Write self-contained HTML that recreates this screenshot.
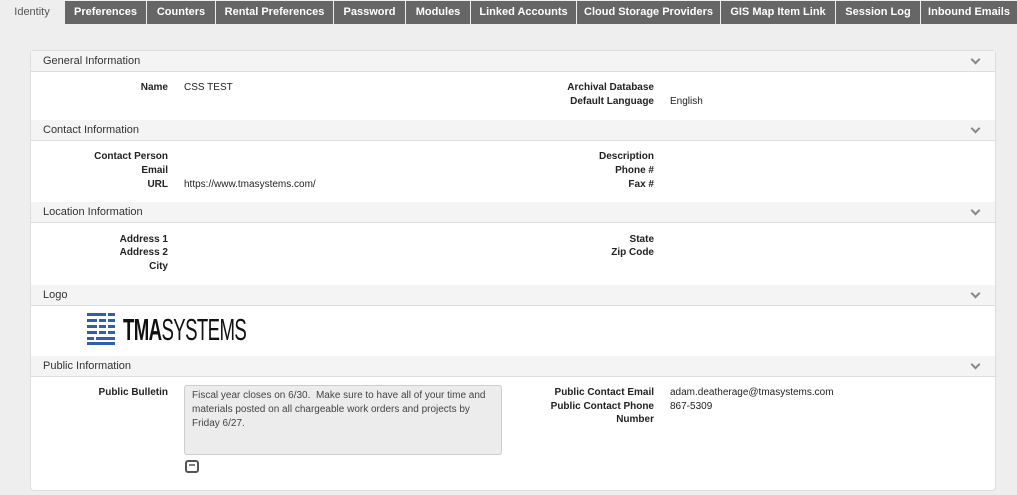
<!DOCTYPE html>
<html><head><style>
*{margin:0;padding:0;box-sizing:border-box}
body{width:1017px;height:495px;background:#eee;font-family:"Liberation Sans",Arial,sans-serif;font-size:10px;color:#222;position:relative;overflow:hidden}
.tabs{position:absolute;top:1px;left:0;height:23px;width:1017px}
.tab{position:absolute;top:0;height:23px;background:#666;color:#fff;font-weight:bold;font-size:11px;line-height:23px;text-align:center;white-space:nowrap}
.tab.act{background:#eee;color:#555;font-weight:normal}
.panel{position:absolute;left:30px;top:50px;width:966px;height:441px;background:#fff;border:1px solid #ddd;border-radius:4px}
.hdr{position:absolute;left:0;width:964px;height:21px;background:#f4f4f4;border-bottom:1px solid #ddd;font-size:11px;line-height:20px;padding-left:12px;color:#333}
.hdr:after{content:"";position:absolute;right:16px;top:5px;width:5px;height:5px;border-right:2px solid #888;border-bottom:2px solid #888;transform:rotate(45deg)}
.l{position:absolute;font-weight:bold;text-align:right;width:200px}
.v{position:absolute}
</style></head><body>
<div class="tabs">
<div class="tab act" style="left:0;width:64px">Identity</div>
<div class="tab" style="left:65px;width:81px">Preferences</div>
<div class="tab" style="left:147px;width:68px">Counters</div>
<div class="tab" style="left:216px;width:117px">Rental Preferences</div>
<div class="tab" style="left:334px;width:71px">Password</div>
<div class="tab" style="left:406px;width:64px">Modules</div>
<div class="tab" style="left:471px;width:105px">Linked Accounts</div>
<div class="tab" style="left:577px;width:143px">Cloud Storage Providers</div>
<div class="tab" style="left:721px;width:114px">GIS Map Item Link</div>
<div class="tab" style="left:836px;width:84px">Session Log</div>
<div class="tab" style="left:921px;width:96px">Inbound Emails</div>
</div>
<div class="panel">
<div class="hdr" style="top:0">General Information</div>
<div class="l" style="left:-63px;top:31px">Name</div><div class="v" style="left:153px;top:31px">CSS TEST</div>
<div class="l" style="left:423px;top:31px">Archival Database</div>
<div class="l" style="left:423px;top:45px">Default Language</div><div class="v" style="left:639px;top:45px">English</div>

<div class="hdr" style="top:69px">Contact Information</div>
<div class="l" style="left:-63px;top:100px">Contact Person</div>
<div class="l" style="left:-63px;top:114px">Email</div>
<div class="l" style="left:-63px;top:128px">URL</div><div class="v" style="left:153px;top:128px">https://www.tmasystems.com/</div>
<div class="l" style="left:423px;top:100px">Description</div>
<div class="l" style="left:423px;top:114px">Phone #</div>
<div class="l" style="left:423px;top:128px">Fax #</div>

<div class="hdr" style="top:151px">Location Information</div>
<div class="l" style="left:-63px;top:183px">Address 1</div>
<div class="l" style="left:-63px;top:196px">Address 2</div>
<div class="l" style="left:-63px;top:210px">City</div>
<div class="l" style="left:423px;top:183px">State</div>
<div class="l" style="left:423px;top:196px">Zip Code</div>

<div class="hdr" style="top:234px">Logo</div>
<svg style="position:absolute;left:56px;top:262px" width="30" height="32">
<g fill="#2f5fae">
<rect x="0" y="0" width="19" height="3"/><rect x="21" y="0" width="7" height="3"/>
<rect x="0" y="6" width="10" height="3"/><rect x="12" y="6" width="7" height="3"/><rect x="21" y="6" width="7" height="3"/>
<rect x="0" y="12" width="10" height="3"/><rect x="12" y="12" width="7" height="3"/><rect x="21" y="12" width="7" height="3"/>
<rect x="0" y="18" width="10" height="3"/><rect x="12" y="18" width="7" height="3"/><rect x="21" y="18" width="7" height="3"/>
<rect x="0" y="24" width="7" height="3"/><rect x="9" y="24" width="19" height="3"/>
<rect x="0" y="29" width="28" height="3"/>
</g></svg>
<div style="position:absolute;left:92px;top:263px;font-size:31px;line-height:32px;letter-spacing:-1px;transform:scaleX(0.6);transform-origin:left;white-space:nowrap;color:#111"><b>TMA</b>SYSTEMS</div>

<div class="hdr" style="top:305px">Public Information</div>
<div class="l" style="left:-63px;top:336px">Public Bulletin</div>
<div style="position:absolute;left:153px;top:334px;width:318px;height:70px;background:#ececec;border:1px solid #ccc;border-radius:3px;padding:3px 7px;line-height:14px;color:#444">Fiscal year closes on 6/30.&nbsp; Make sure to have all of your time and materials posted on all chargeable work orders and projects by Friday 6/27.</div>
<svg style="position:absolute;left:154px;top:409px" width="14" height="13"><rect x="1" y="1" width="12" height="11" rx="2" fill="none" stroke="#555" stroke-width="2"/><path d="M4 5h6" stroke="#555" stroke-width="1.5"/></svg>
<div class="l" style="left:423px;top:336px">Public Contact Email</div><div class="v" style="left:639px;top:336px">adam.deatherage@tmasystems.com</div>
<div class="l" style="left:423px;top:350px">Public Contact Phone</div><div class="v" style="left:639px;top:350px">867-5309</div>
<div class="l" style="left:423px;top:363px">Number</div>
</div>
</body></html>
